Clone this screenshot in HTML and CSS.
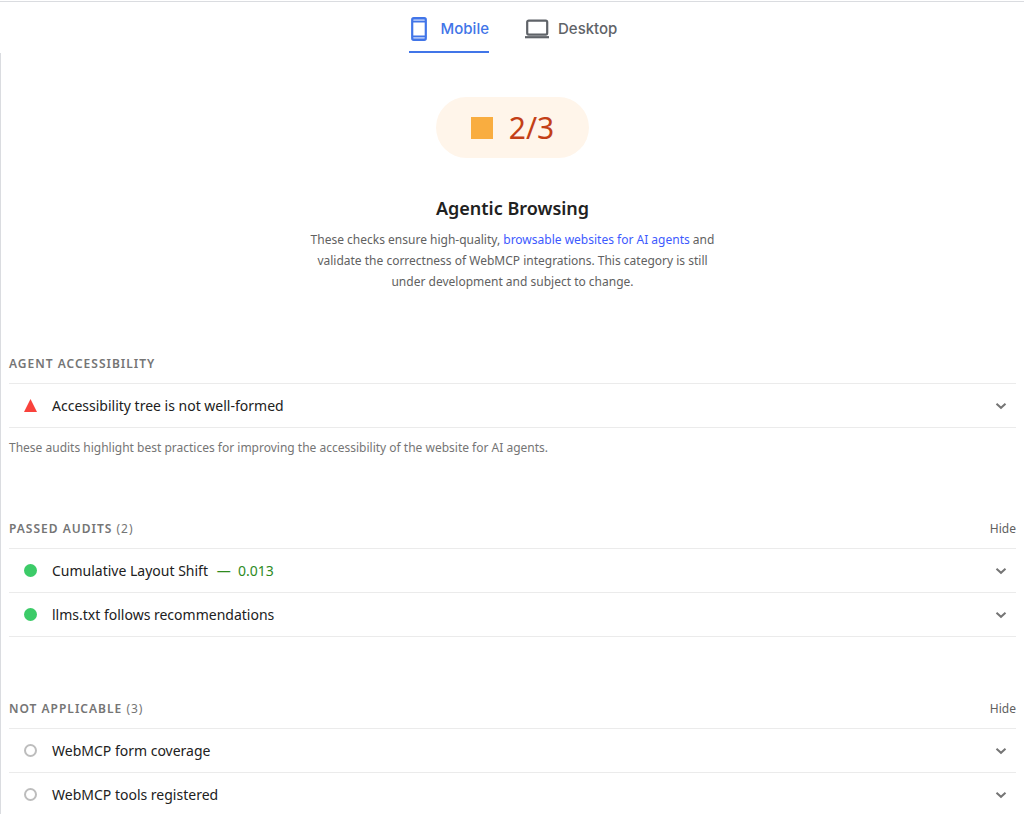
FILE: index.html
```html
<!DOCTYPE html>
<html lang="en">
<head>
    <meta charset="UTF-8">
    <meta name="viewport" content="width=device-width, initial-scale=1">
    <title>Agentic Browsing</title>
    <link rel="stylesheet" href="styles.css">
</head>
<body>
<nav class="tabs">
    <button type="button" class="tab select">
        <svg class="icon-mobile" width="16" height="24" viewBox="0 0 16 24">
            <rect x="1" y="1" width="14" height="22" rx="1.5" fill="#a9c1f7"/>
            <path d="M2 5h12v14H2z" fill="#fff"/>
            <path d="M2 4.8h12M2 19.2h12" stroke="currentColor" stroke-width="1.6"/>
            <rect x="1.2" y="1.2" width="13.6" height="21.6" rx="1.5" fill="none" stroke="currentColor" stroke-width="2.2"/>
        </svg>
        Mobile
    </button>
    <button type="button" class="tab">
        <svg class="icon-desktop" width="24" height="20" viewBox="0 0 24 20">
            <rect x="2.2" y="1.600" width="20" height="14" rx="1.5" fill="none" stroke="currentColor" stroke-width="2.2"/>
            <path d="M0 18.200h24" stroke="currentColor" stroke-width="2.2"/>
        </svg>
        Desktop
    </button>
</nav>

<main class="report">
    <header class="category">
        <div class="gauge"><span class="gauge-icon"></span>2/3</div>
        <h1>Agentic Browsing</h1>
        <p>These checks ensure high-quality, <a href="#">browsable websites for AI agents</a> and validate the correctness of WebMCP integrations. This category is still under development and subject to change.</p>
    </header>

    <section class="group">
        <div class="group-header">
            <h2>Agent accessibility</h2>
        </div>
        <details class="audit">
            <summary>
                <span class="mark fail"></span>
                <span class="audit-title">Accessibility tree is not well-formed</span>
                <svg class="chevron" width="12" height="8" viewBox="0 0 12 8"><path d="M1.5 1.800L6 5.800l4.500-4"/></svg>
            </summary>
        </details>
        <p class="group-note">These audits highlight best practices for improving the accessibility of the website for AI agents.</p>
    </section>

    <section class="group">
        <div class="group-header">
            <h2>Passed audits <span>(2)</span></h2>
            <button type="button" class="toggle">Hide</button>
        </div>
        <details class="audit">
            <summary>
                <span class="mark pass"></span>
                <span class="audit-title">Cumulative Layout Shift <span class="value">—&nbsp; 0.013</span></span>
                <svg class="chevron" width="12" height="8" viewBox="0 0 12 8"><path d="M1.5 1.800L6 5.800l4.500-4"/></svg>
            </summary>
        </details>
        <details class="audit">
            <summary>
                <span class="mark pass"></span>
                <span class="audit-title">llms.txt follows recommendations</span>
                <svg class="chevron" width="12" height="8" viewBox="0 0 12 8"><path d="M1.5 1.800L6 5.800l4.500-4"/></svg>
            </summary>
        </details>
    </section>

    <section class="group">
        <div class="group-header">
            <h2>Not applicable <span>(3)</span></h2>
            <button type="button" class="toggle">Hide</button>
        </div>
        <details class="audit">
            <summary>
                <span class="mark na"></span>
                <span class="audit-title">WebMCP form coverage</span>
                <svg class="chevron" width="12" height="8" viewBox="0 0 12 8"><path d="M1.5 1.800L6 5.800l4.500-4"/></svg>
            </summary>
        </details>
        <details class="audit">
            <summary>
                <span class="mark na"></span>
                <span class="audit-title">WebMCP tools registered</span>
                <svg class="chevron" width="12" height="8" viewBox="0 0 12 8"><path d="M1.5 1.800L6 5.800l4.500-4"/></svg>
            </summary>
        </details>
    </section>
</main>
</body>
</html>
```
FILE: styles.css
```css
* {
    box-sizing: border-box;
    margin: 0;
    padding: 0;
}

body {
    padding-top: 1px;
    background: #fff;
    color: #212121;
    font-family: "Segoe UI", "Noto Sans", sans-serif;
    font-size: 14px;
    line-height: 22px;
}

button {
    border: 0;
    background: none;
    font: inherit;
    cursor: pointer;
}

/* device tabs */
.tabs {
    display: flex;
    justify-content: center;
    gap: 36px;
    height: 52px;
    padding-left: 2px;
    border-top: 1px solid #dadce0;
}

.tab {
    display: flex;
    align-items: center;
    height: 51px;
    padding-top: 5px;
    border-bottom: 2px solid transparent;
    color: #5f6368;
    font-family: Inter, sans-serif;
    font-size: 15px;
    font-weight: 500;
}

.tab.select {
    border-bottom-color: #4175e8;
    color: #4175e8;
}

.icon-mobile {
    margin: 0 14px 0 2px;
}

.icon-desktop {
    margin-right: 9px;
}

/* category score */
.report {
    padding: 44px 8px 0;
    border-left: 1px solid #dadce0;
}

.category {
    max-width: 410px;
    margin: 0 auto 61px;
    text-align: center;
}

.gauge {
    display: inline-flex;
    align-items: center;
    gap: 16px;
    height: 61px;
    padding: 0 35px;
    border-radius: 31px;
    background: #fff5ea;
    color: #c33f17;
    font-size: 30px;
}

.gauge-icon {
    width: 22px;
    height: 22px;
    background: #f9ad40;
}

.category h1 {
    margin: 37px 0 8px;
    font-size: 18px;
    font-weight: 600;
    line-height: 26px;
}

.category p {
    color: #616161;
    font-size: 12px;
    line-height: 21px;
}

.category a {
    color: #3d5afe;
    text-decoration: none;
}

/* audit groups */
.group {
    margin-bottom: 61px;
}

.group:last-child {
    margin-bottom: 0;
}

.group-header {
    display: flex;
    justify-content: space-between;
    align-items: center;
    height: 30px;
    padding-bottom: 8px;
}

.group-header h2 {
    color: #757575;
    font-size: 12px;
    font-weight: 600;
    letter-spacing: 1px;
    text-transform: uppercase;
}

.group-header h2 span {
    font-weight: 400;
}

.toggle {
    color: #616161;
    font-size: 12px;
}

.audit {
    border-bottom: 1px solid #ebebeb;
}

.group-header + .audit {
    border-top: 1px solid #ebebeb;
}

.audit summary {
    display: flex;
    align-items: center;
    height: 43px;
    padding: 0 9px 0 15px;
    list-style: none;
    cursor: pointer;
}

.audit-title {
    flex: 1;
}

.value {
    margin-left: 5px;
    color: #2e8b1e;
}

.mark {
    width: 13px;
    height: 13px;
    margin-right: 15px;
}

.fail {
    background: #f9423c;
    clip-path: polygon(50% 0, 100% 100%, 0 100%);
}

.pass {
    border-radius: 50%;
    background: #3ccb68;
}

.na {
    border: 2px solid #bdbdbd;
    border-radius: 50%;
}

.chevron path {
    fill: none;
    stroke: #757575;
    stroke-width: 2;
}

.group-note {
    margin-top: 10px;
    color: #757575;
    font-size: 12px;
    line-height: 19px;
}
```
